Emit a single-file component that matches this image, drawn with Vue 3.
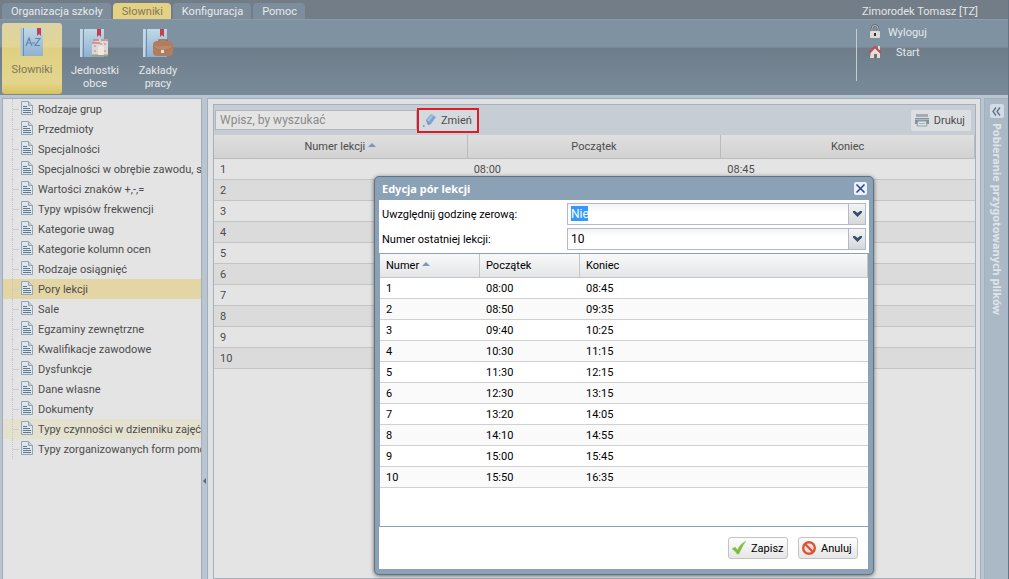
<script setup>
import { ref } from 'vue'

const tabs = ['Organizacja szkoły', 'Słowniki', 'Konfiguracja', 'Pomoc']
const activeTab = ref('Słowniki')

const tree = [
  'Rodzaje grup',
  'Przedmioty',
  'Specjalności',
  'Specjalności w obrębie zawodu, specjalizacje',
  'Wartości znaków +,-,=',
  'Typy wpisów frekwencji',
  'Kategorie uwag',
  'Kategorie kolumn ocen',
  'Rodzaje osiągnięć',
  'Pory lekcji',
  'Sale',
  'Egzaminy zewnętrzne',
  'Kwalifikacje zawodowe',
  'Dysfunkcje',
  'Dane własne',
  'Dokumenty',
  'Typy czynności w dzienniku zajęć',
  'Typy zorganizowanych form pomocy'
]
const selected = ref('Pory lekcji')
const hovered = 'Typy czynności w dzienniku zajęć'

const lessons = [
  [1, '08:00', '08:45'],
  [2, '08:50', '09:35'],
  [3, '09:40', '10:25'],
  [4, '10:30', '11:15'],
  [5, '11:30', '12:15'],
  [6, '12:30', '13:15'],
  [7, '13:20', '14:05'],
  [8, '14:10', '14:55'],
  [9, '15:00', '15:45'],
  [10, '15:50', '16:35']
]
const zero = ref('Nie')
const last = ref('10')
const query = ref('')
</script>

<template>
  <div class="app">
    <header class="top">
      <nav class="tabs">
        <button
          v-for="t in tabs"
          :key="t"
          type="button"
          class="tab"
          :class="{ active: t === activeTab }"
          @click="activeTab = t"
        >{{ t }}</button>
      </nav>
      <span class="user">Zimorodek Tomasz [TZ]</span>
    </header>

    <div class="ribbon">
      <div class="tools">
        <button type="button" class="tool active">
          <svg width="32" height="32" viewBox="0 0 32 32" aria-hidden="true">
            <defs>
              <linearGradient id="book" x1="0" y1="0" x2="0" y2="1">
                <stop offset="0" stop-color="#c0d9e6" />
                <stop offset="1" stop-color="#8fb0d0" />
              </linearGradient>
            </defs>
            <rect x="5" y="2" width="22" height="28" fill="url(#book)" />
            <path d="M7.500 2v28" stroke="#6c8cab" />
            <path d="M5.500 2v28" stroke="#a9c3d8" stroke-width="2" />
            <path d="M21 2h4v8l-2-2-2 2z" fill="#c43f50" />
            <g fill="none" stroke="#6484b0" stroke-width="1.200">
              <path d="M10 20l3-8 3 8M11 17h4M16 17h3M19 12.500h5l-5 7h5" />
            </g>
          </svg>
          <span>Słowniki</span>
        </button>
        <button type="button" class="tool">
          <svg width="32" height="32" viewBox="0 0 32 32" aria-hidden="true">
            <rect x="1" y="2" width="24" height="28" fill="url(#book)" />
            <path d="M4.500 2v28" stroke="#6c8cab" />
            <path d="M2 2v28" stroke="#c6d7e4" stroke-width="2" />
            <path d="M18 2h4v8l-2-2-2 2z" fill="#c43f50" />
            <path d="M13 16l8-4h8v16H13z" fill="#ded8d4" />
            <path d="M13 16h8M14 13h6M22 13h7" stroke="#cd8083" stroke-width="1.500" />
            <path d="M15 19h4M21 17h6M15 24h3M21 24h6" stroke="#ccb0ae" stroke-width="2" stroke-dasharray="2 2" />
            <path d="M13 28.500h16" stroke="#95a482" stroke-width="2" />
            <path d="M19 20l3-2 3 2v8h-6z" fill="#efe7dc" />
          </svg>
          <span>Jednostki<br>obce</span>
        </button>
        <button type="button" class="tool">
          <svg width="32" height="32" viewBox="0 0 32 32" aria-hidden="true">
            <rect x="1" y="2" width="24" height="28" fill="url(#book)" />
            <path d="M4.500 2v28" stroke="#6c8cab" />
            <path d="M2 2v28" stroke="#c6d7e4" stroke-width="2" />
            <path d="M18 2h4v8l-2-2-2 2z" fill="#c43f50" />
            <path d="M17 15v-2h8v2" fill="none" stroke="#9a6a52" stroke-width="1.500" />
            <rect x="11" y="14" width="20" height="15" rx="4" fill="#b07d5e" />
            <path d="M11 19c4 6 16 6 20 0" fill="#bb8969" stroke="#a4755a" />
            <rect x="19" y="23" width="3" height="3" fill="#e9dfd3" />
          </svg>
          <span>Zakłady<br>pracy</span>
        </button>
      </div>
      <nav class="account">
        <a href="#wyloguj">
          <svg width="14" height="16" viewBox="0 0 14 16" aria-hidden="true">
            <path d="M4 8V4.500a3 3 0 0 1 6 0V8" fill="none" stroke="#5c6368" stroke-width="2.500" />
            <path d="M4 8V4.500a3 3 0 0 1 6 0V8" fill="none" stroke="#c3c7c9" />
            <rect x="2" y="7" width="10" height="7" rx="1" fill="#dedcd8" />
            <path d="M7 9v3" stroke="#333" stroke-width="2" />
          </svg>
          <span>Wyloguj</span>
        </a>
        <a href="#start" class="start">
          <svg width="14" height="16" viewBox="0 0 14 16" aria-hidden="true">
            <path d="M10 2h2v4h-2z" fill="#e0dcd8" />
            <path d="M3 7l4-4 5 5v6H2z" fill="#e2deda" />
            <path d="M1 9l6-6 6 6" fill="none" stroke="#c34a52" stroke-width="2" />
            <path d="M6 10h3v4H6z" fill="#766d6c" />
          </svg>
          <span>Start</span>
        </a>
      </nav>
    </div>

    <div class="body">
      <aside class="sidebar">
        <ul>
          <li v-for="n in tree" :key="n" :class="{ selected: n === selected, hover: n === hovered }">
            <a href="#" @click.prevent="selected = n">
              <svg width="12" height="14" viewBox="0 0 12 14" aria-hidden="true">
                <path d="M.5.500h7l4 4v9H.5z" fill="#dde6ed" stroke="#91a5b5" />
                <path d="M7.500.500v4h4" fill="#c5d2dc" stroke="#91a5b5" />
                <path d="M2 5.500h4M2 7.500h7M2 9.500h8M2 11.500h8" stroke="#60788e" />
              </svg>
              <span>{{ n }}</span>
            </a>
          </li>
        </ul>
      </aside>

      <button type="button" class="splitter" aria-label="Zwiń panel"><i></i></button>

      <main class="center">
        <div class="panel">
          <div class="toolbar">
            <input v-model="query" type="text" class="search" placeholder="Wpisz, by wyszukać" aria-label="Wpisz, by wyszukać">
            <button type="button" class="edit">
              <svg width="16" height="16" viewBox="0 0 16 16" aria-hidden="true">
                <path d="M4 8l5-6 5 3-5 7-3 1z" fill="#7fa5ce" />
                <path d="M5 8l5-6 2 1-5 7z" fill="#a3c2e0" />
                <path d="M4 8l5 4-3 1z" fill="#7b9cc0" />
                <path d="M1 14h1.500" stroke="#7188a3" stroke-width="1.500" />
              </svg>
              <span>Zmień</span>
            </button>
            <button type="button" class="print">
              <svg width="16" height="16" viewBox="0 0 16 16" aria-hidden="true">
                <path d="M2 2h12v3H2z" fill="#a5aaae" />
                <path d="M1 6h14v6H1z" fill="#878e94" />
                <path d="M1 7.500h14" stroke="#b3b9bd" />
                <path d="M4 9h8l1 5H3z" fill="#d9e1e8" stroke="#96a5b1" />
                <path d="M5 11.500h6" stroke="#a6b9c9" />
              </svg>
              <span>Drukuj</span>
            </button>
          </div>
          <table class="grid main-grid">
            <thead>
              <tr>
                <th>Numer lekcji<i class="asc"></i></th>
                <th>Początek</th>
                <th>Koniec</th>
              </tr>
            </thead>
            <tbody>
              <tr v-for="r in lessons" :key="r[0]">
                <td v-for="c in r" :key="c">{{ c }}</td>
              </tr>
            </tbody>
          </table>
        </div>
      </main>

      <aside class="files">
        <button type="button" aria-label="Rozwiń panel">
          <svg width="9" height="9" viewBox="0 0 9 9" aria-hidden="true">
            <path d="M4 .5l-3 4 3 4M8 .5l-3 4 3 4" fill="none" stroke="#5a7189" stroke-width="1.300" />
          </svg>
        </button>
        <span>Pobieranie przygotowanych plików</span>
      </aside>
    </div>

    <section class="dialog" role="dialog" aria-labelledby="dialog-title">
      <header class="dialog-head">
        <h2 id="dialog-title">Edycja pór lekcji</h2>
        <button type="button" aria-label="Zamknij">
          <svg width="9" height="9" viewBox="0 0 9 9" aria-hidden="true">
            <path d="M.5.500l8 8M8.500.500l-8 8" stroke="#2c3fa0" stroke-width="1.500" />
          </svg>
        </button>
      </header>
      <form class="form" @submit.prevent>
        <label for="zero">Uwzględnij godzinę zerową:</label>
        <div class="combo">
          <select id="zero" v-model="zero" class="marked">
            <option>Nie</option>
            <option>Tak</option>
          </select>
          <span class="arrow"><svg width="9" height="6" viewBox="0 0 9 6"><path d="M0 0h2l2.500 2L7 0h2v1.500L4.500 6 0 1.500z" fill="#344e6e" /></svg></span>
        </div>
        <label for="last">Numer ostatniej lekcji:</label>
        <div class="combo">
          <select id="last" v-model="last">
            <option v-for="r in lessons" :key="r[0]">{{ r[0] }}</option>
          </select>
          <span class="arrow"><svg width="9" height="6" viewBox="0 0 9 6"><path d="M0 0h2l2.500 2L7 0h2v1.500L4.500 6 0 1.500z" fill="#344e6e" /></svg></span>
        </div>
      </form>
      <div class="dialog-body">
        <table class="grid edit-grid">
          <colgroup>
            <col class="narrow">
            <col class="narrow">
            <col>
          </colgroup>
          <thead>
            <tr>
              <th>Numer<i class="asc"></i></th>
              <th>Początek</th>
              <th>Koniec</th>
            </tr>
          </thead>
          <tbody>
            <tr v-for="r in lessons" :key="r[0]">
              <td v-for="c in r" :key="c">{{ c }}</td>
            </tr>
          </tbody>
        </table>
      </div>
      <footer class="dialog-foot">
        <button type="button">
          <svg width="16" height="16" viewBox="0 0 16 16" aria-hidden="true">
            <path d="M1 9l3-2 2.500 3C8 6 11 3 15 1c-3 4-5 8-7 13H6C5 12 3 10 1 9z" fill="#7dbb3c" stroke="#a1cf72" stroke-width=".6" />
          </svg>
          <span>Zapisz</span>
        </button>
        <button type="button">
          <svg width="16" height="16" viewBox="0 0 16 16" aria-hidden="true">
            <circle cx="8" cy="8" r="5.800" fill="#f7e3dc" stroke="#dd5436" stroke-width="2.400" />
            <path d="M4 4l8 8" stroke="#dd5436" stroke-width="2.400" />
          </svg>
          <span>Anuluj</span>
        </button>
      </footer>
    </section>
  </div>
</template>

<style>
body {
  margin: 0;
}
</style>

<style scoped>
.app,
.app * {
  box-sizing: border-box;
}
.app {
  position: relative;
  display: flex;
  flex-direction: column;
  height: 100vh;
  overflow: hidden;
  background: #bbc5d0;
  border-right: 1px solid #647483;
  font: 11px/14px Roboto, "Noto Sans", sans-serif;
  color: #4c4c4c;
}
button,
input,
select {
  margin: 0;
  padding: 0;
  border: 0;
  background: none;
  font: inherit;
  color: inherit;
}
a {
  color: inherit;
  text-decoration: none;
}
svg {
  display: block;
  flex: none;
}

.top {
  display: flex;
  justify-content: space-between;
  align-items: flex-end;
  height: 19px;
  padding: 0 30px 0 2px;
  background: #727d88;
}
.tabs {
  display: flex;
  gap: 2px;
}
.tab {
  height: 16px;
  padding: 1px 8px 0 9px;
  border-radius: 4px 4px 0 0;
  background: #7d8d9b;
  color: #e8eaec;
}
.tab.active {
  background: #e3d184;
  color: #85775a;
}
.user {
  color: #e4e6e8;
}

.ribbon {
  display: flex;
  justify-content: space-between;
  height: 76px;
  padding: 3px 0 0 2px;
  border-top: 1px solid #8c9aa6;
  background: linear-gradient(#7f92a1 0 27px, #6f7d8a 28px, #788a99);
  color: #e6e8ea;
}
.tools {
  display: flex;
  gap: 3px;
}
.tool {
  display: flex;
  flex-direction: column;
  align-items: center;
  gap: 5px;
  width: 60px;
  height: 71px;
  padding-top: 4px;
  border-radius: 3px;
  line-height: 13px;
}
.tool.active {
  padding-top: 3px;
  background: linear-gradient(#ddd4a5, #e2d595 24px, #dfd080 25px, #e3d58e 60px, #d9c25f);
  color: #80775c;
}
.account {
  display: flex;
  flex-direction: column;
  gap: 4px;
  width: 152px;
  height: 52px;
  margin-top: 6px;
  padding-left: 11px;
  border-left: 1px solid #c5ccd2;
}
.account a {
  display: flex;
  align-items: center;
  gap: 6px;
  height: 16px;
}
.account a:first-child {
  margin-top: -5px;
}
.account .start {
  gap: 14px;
}
.account span {
  padding-top: 2px;
}

.body {
  flex: 1;
  display: flex;
  min-height: 0;
  padding: 3px 0 0 2px;
}
.sidebar {
  flex: none;
  width: 200px;
  overflow: hidden;
  border: solid #9daebf;
  border-width: 1px 1px 0;
  background: #e4e4e4;
}
ul {
  margin: 0;
  padding: 0;
  list-style: none;
}
li {
  border-left: 9px solid transparent;
}
li a {
  display: flex;
  align-items: center;
  gap: 5px;
  height: 20px;
  white-space: nowrap;
  background: linear-gradient(#cdcdcd, #cdcdcd) 0 10px / 6px 1px no-repeat;
  border-left: 1px dotted #c6c6c6;
  padding-left: 8px;
}
li svg {
  margin-bottom: 2px;
}
li span {
  padding-top: 2px;
}
.selected {
  background: #e4d5a5;
  border-color: #e4d5a5;
}
.hover {
  background: #e5e1cf;
  border-color: #e5e1cf;
}
.splitter {
  flex: none;
  display: flex;
  align-items: flex-end;
  justify-content: center;
  width: 5px;
  height: 100%;
  padding-bottom: 95px;
}
.splitter i {
  border: solid transparent;
  border-width: 3px 3px 3px 0;
  border-right-color: #5a6672;
}
.center {
  flex: 1;
  min-width: 0;
  padding: 5px 4px 0 5px;
  border: 1px solid #9daebf;
  border-bottom: 0;
  background: #dfe1e3;
}
.panel {
  height: 100%;
  border: 1px solid #a5b0bb;
  background: #e4e4e4;
}
.toolbar {
  display: flex;
  align-items: center;
  height: 30px;
  padding: 0 4px 0 1px;
  background: #c6cdd5;
}
.search {
  width: 202px;
  height: 20px;
  padding: 0 4px;
  border: 1px solid #b1b6bc;
  background: #e4e4e4;
  font-size: 12px;
}
.search::placeholder {
  color: #8b8b8b;
  opacity: 1;
}
.edit {
  display: flex;
  align-items: center;
  gap: 3px;
  height: 25px;
  padding: 0 5px 0 3px;
  border: 2px solid #d91f26;
  background: #d6dade;
}
.print {
  display: flex;
  align-items: center;
  gap: 4px;
  height: 21px;
  margin-left: auto;
  padding: 0 6px 0 3px;
  border-radius: 2px;
  background: #dcdfe2;
}
.toolbar span {
  padding-top: 2px;
}

.grid {
  width: 100%;
  table-layout: fixed;
  border-collapse: separate;
  border-spacing: 0;
}
.grid th,
.grid td {
  padding: 0 6px;
  text-align: left;
  font-weight: normal;
}
.grid td {
  height: 21px;
  padding-top: 2px;
  border-bottom: 1px solid #c4c4c4;
}
.grid th {
  height: 24px;
  border-right: 1px solid #bcbcbc;
  border-bottom: 1px solid #bcbcbc;
}
.main-grid th {
  text-align: center;
  background: linear-gradient(#dfdfdf, #d2d2d2);
}
.main-grid tbody tr:nth-child(even) {
  background: #dbdbdb;
}
.asc {
  display: inline-block;
  margin: 0 0 3px 3px;
  border: solid transparent;
  border-width: 0 4px 4px;
  border-bottom-color: #7798c2;
}

.files {
  flex: none;
  display: flex;
  flex-direction: column;
  align-items: center;
  gap: 5px;
  width: 24px;
  margin-left: 3px;
  padding-top: 5px;
  border: 1px solid #9fb2c4;
  border-width: 1px 0 0 1px;
  background: #abb9c7;
}
.files button {
  display: grid;
  place-items: center;
  width: 14px;
  height: 14px;
  border-radius: 2px;
  background: #d3dce5;
}
.files span {
  writing-mode: vertical-rl;
  font-family: "Noto Sans", sans-serif;
  font-weight: bold;
  color: #e0e4e8;
}

.dialog {
  position: absolute;
  top: 176px;
  left: 374px;
  display: flex;
  flex-direction: column;
  width: 500px;
  height: 399px;
  padding: 0 4px 5px;
  border: 1px solid #5f7182;
  border-radius: 5px;
  background: #8ba1b6;
  box-shadow: 0 1px 4px #0008;
  color: #000;
}
.dialog-head {
  display: flex;
  align-items: center;
  justify-content: space-between;
  height: 23px;
  padding: 0 2px 0 3px;
}
h2 {
  margin: 0;
  font: bold 11px/14px "Noto Sans", sans-serif;
  color: #fff;
}
.dialog-head button {
  display: grid;
  place-items: center;
  width: 13px;
  height: 13px;
  border-radius: 2px;
  background: #e9f1fc;
}
.form {
  display: grid;
  grid-template-columns: 185px 1fr;
  align-items: center;
  row-gap: 3px;
  padding: 3px;
  border-bottom: 1px solid #8ba1b6;
  background: #fff;
}
label {
  padding-top: 2px;
}
.combo {
  display: flex;
  height: 22px;
  border: 1px solid #b5b8c8;
  background: linear-gradient(#f1f3f4, #fff 8px);
}
select {
  flex: 1;
  padding: 0 3px;
  appearance: none;
  font-size: 12px;
}
.marked {
  color: #fff;
  background: linear-gradient(#3399ff, #3399ff) 3px 2px / 17px 15px no-repeat;
}
.arrow {
  display: grid;
  place-items: center;
  width: 17px;
  border-left: 1px solid #b5b8c8;
  background: linear-gradient(#f4f4f4, #d5d7da);
  pointer-events: none;
}
.dialog-body {
  flex: 1;
  border: solid #8ba1b6;
  border-width: 0 1px 1px 1px;
  background: #fff;
}
.edit-grid .narrow {
  width: 100px;
}
.edit-grid th {
  background: linear-gradient(#f9f9f9, #e4e5e7);
  border-color: #c5c5c5;
}
.edit-grid td {
  border-color: #d0d0d0;
}
.edit-grid tbody tr:nth-child(even) {
  background: #fafafa;
}
.dialog-foot {
  display: flex;
  justify-content: flex-end;
  align-items: center;
  gap: 10px;
  height: 42px;
  margin-right: 1px;
  padding-right: 10px;
  background: #fff;
}
.dialog-foot button {
  display: flex;
  align-items: center;
  gap: 4px;
  width: 60px;
  height: 22px;
  padding: 0 2px;
  border: 1px solid #c3c3c3;
  border-radius: 3px;
  background: linear-gradient(#fdfdfd, #e6e6e6);
}
.dialog-foot span {
  padding-top: 2px;
}
</style>
